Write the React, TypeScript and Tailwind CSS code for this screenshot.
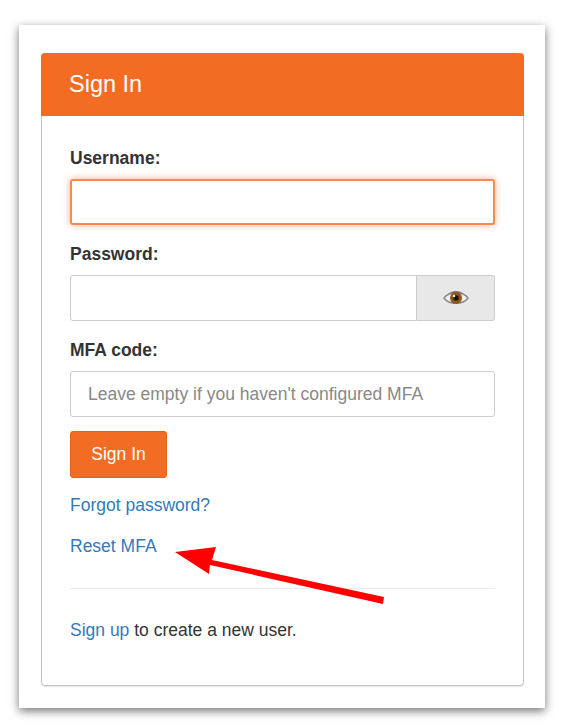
export default function App() {
  const label = "block text-[17.5px] leading-[25px] font-bold text-[#333]";
  return (
    <div className="relative h-[728px] w-[571px] overflow-hidden bg-white pt-[25px] pl-[19px] font-['Liberation_Sans',sans-serif] text-[#333]">
      <div className="h-[683px] w-[526px] bg-white pt-[28px] pl-[22px] shadow-[0_3px_9px_rgba(0,0,0,0.55)]">
        <div className="h-[633px] w-[483px] rounded-[4px] border border-[#c4c4c4] bg-white shadow-[0_1px_1px_rgba(0,0,0,0.1)]">
          <div className="-mx-px -mt-px flex h-[63px] items-center rounded-t-[4px] bg-[#f26d23] pl-[28px] text-[23.5px] text-white">
            Sign In
          </div>
          <div className="px-[28px] pt-[30px]">
            <label className={label}>Username:</label>
            <div className="mt-[8px] h-[46px] w-[425px] rounded-[3px] border-2 border-[#fb8a4e] bg-white shadow-[0_0_7px_rgba(250,130,70,0.65)]" />
            <label className={`${label} mt-[17px]`}>Password:</label>
            <div className="mt-[8px] flex h-[46px] w-[425px]">
              <div className="flex-1 rounded-l-[3px] border border-[#ccc] bg-white" />
              <div className="flex w-[78px] items-center justify-center rounded-r-[3px] border border-l-0 border-[#ccc] bg-[#e8e8e8]">
                <svg width="26" height="20" viewBox="0 0 26 20">
                  <path d="M1 10 C6 3 20 3 25 10 C20 17 6 17 1 10Z" fill="#f0eeef" stroke="#8d8890" strokeWidth="1.4" />
                  <path d="M4 7 C9 1.5 17 1.5 22 7 C17 4 9 4 4 7Z" fill="#77727a" />
                  <circle cx="13" cy="10" r="6" fill="#8a5a14" />
                  <circle cx="13" cy="10" r="2.8" fill="#1e1208" />
                  <circle cx="11" cy="8" r="1.2" fill="#fff" />
                </svg>
              </div>
            </div>
            <label className={`${label} mt-[17px]`}>MFA code:</label>
            <div className="mt-[8px] flex h-[46px] w-[425px] items-center rounded-[3px] border border-[#ccc] bg-white pl-[17px] text-[17.5px] text-[#888]">
              Leave empty if you haven't configured MFA
            </div>
            <button className="mt-[14px] block h-[47px] w-[97px] rounded-[3px] border border-[#e0621c] bg-[#f26d23] text-[17.5px] text-white">
              Sign In
            </button>
            <div className="mt-[15px] text-[17.5px] leading-[25px] text-[#337ab7]">Forgot password?</div>
            <div className="mt-[16px] text-[17.5px] leading-[25px] text-[#337ab7]">Reset MFA</div>
            <hr className="mt-[29px] w-[425px] border-t border-[#eaeaea]" />
            <div className="mt-[29px] text-[17.5px] leading-[25px]">
              <span className="text-[#337ab7]">Sign up</span> to create a new user.
            </div>
          </div>
        </div>
      </div>
      <svg className="absolute top-0 left-0" width="571" height="728" viewBox="0 0 571 728">
        <polygon points="175,552 216,547 212,560 384,597 383,604 210,565 209,574" fill="#ff0000" />
      </svg>
    </div>
  );
}
